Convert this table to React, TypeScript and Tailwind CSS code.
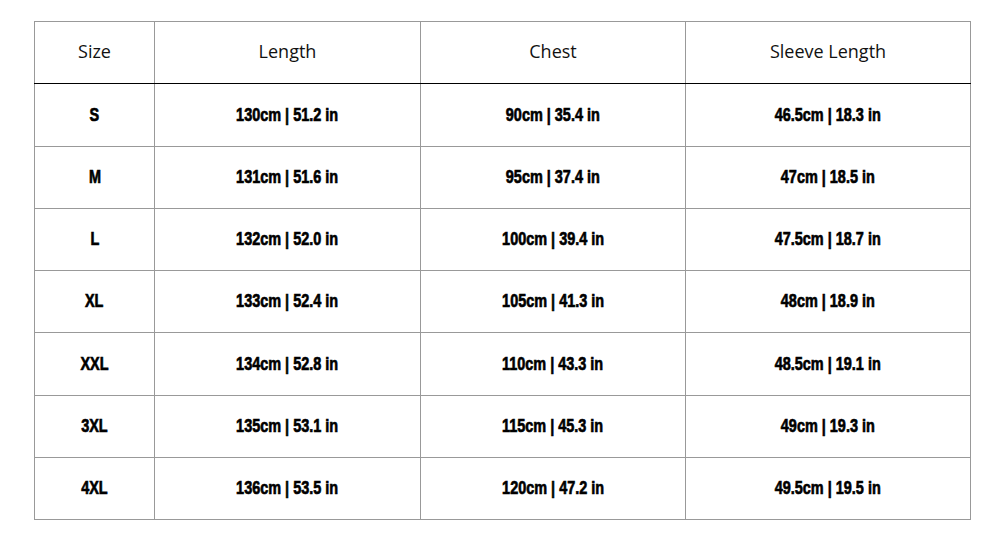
const rows = [
  ['S', '130cm | 51.2 in', '90cm | 35.4 in', '46.5cm | 18.3 in'],
  ['M', '131cm | 51.6 in', '95cm | 37.4 in', '47cm | 18.5 in'],
  ['L', '132cm | 52.0 in', '100cm | 39.4 in', '47.5cm | 18.7 in'],
  ['XL', '133cm | 52.4 in', '105cm | 41.3 in', '48cm | 18.9 in'],
  ['XXL', '134cm | 52.8 in', '110cm | 43.3 in', '48.5cm | 19.1 in'],
  ['3XL', '135cm | 53.1 in', '115cm | 45.3 in', '49cm | 19.3 in'],
  ['4XL', '136cm | 53.5 in', '120cm | 47.2 in', '49.5cm | 19.5 in'],
];

const heads = ['Size', 'Length', 'Chest', 'Sleeve Length'];
const widths = ['w-[120px]', 'w-[266px]', 'w-[265px]', 'w-[285px]'];
const heights = ['h-[63px]', 'h-[62px]', 'h-[62px]', 'h-[62px]', 'h-[63px]', 'h-[62px]', 'h-[62px]'];

export default function App() {
  return (
    <div className="w-[1008px] h-[537px] bg-white pt-[21px] pl-[34px]">
      <table className="w-[937px] border-collapse table-fixed">
        <thead>
          <tr className="h-[62px]">
            {heads.map((h, i) => (
              <th
                key={h}
                className={`${widths[i]} border border-[#999] border-b-black font-normal text-[18px] text-[#111] text-center align-middle pb-[3px] font-['Open_Sans',sans-serif]`}
              >
                {h}
              </th>
            ))}
          </tr>
        </thead>
        <tbody>
          {rows.map((r, ri) => (
            <tr key={r[0]} className={heights[ri]}>
              {r.map((c, i) => (
                <td key={i} className="border border-[#999] text-center">
                  <span className="inline-block scale-x-[0.76] whitespace-nowrap text-black text-[19px] font-bold [-webkit-text-stroke:0.7px_black] font-['Liberation_Sans',Arial,sans-serif]">
                    {c}
                  </span>
                </td>
              ))}
            </tr>
          ))}
        </tbody>
      </table>
    </div>
  );
}
